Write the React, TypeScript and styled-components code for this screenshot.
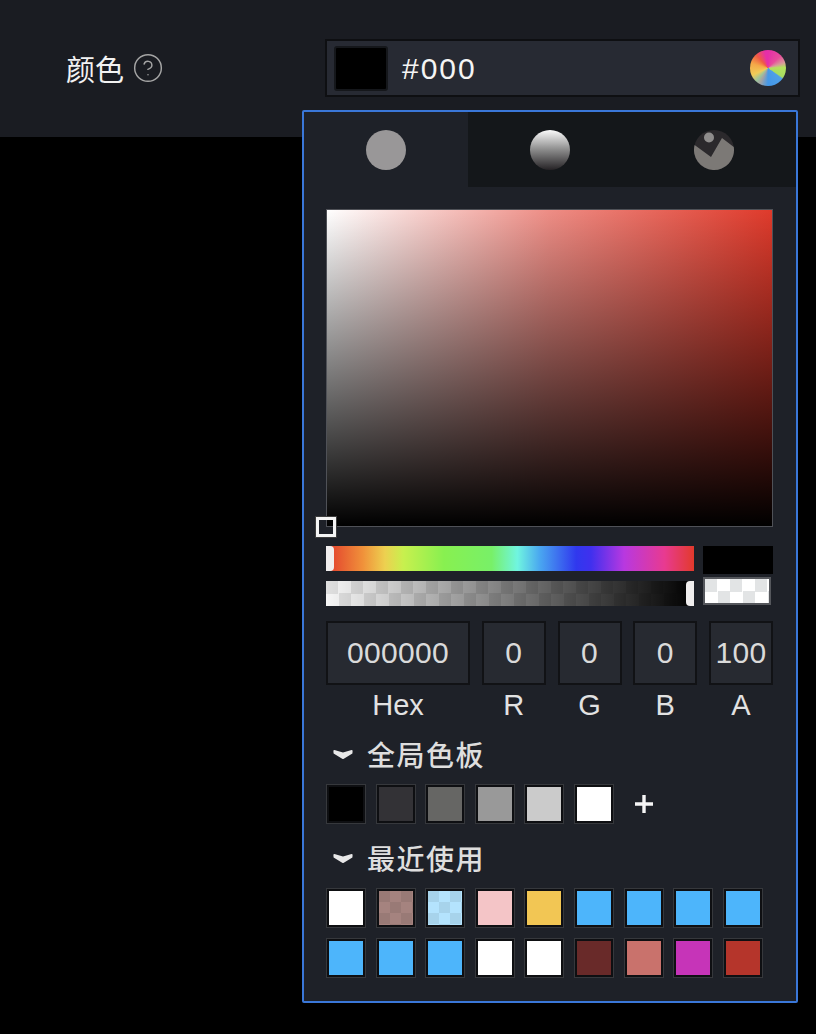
import React from 'react';
import styled, { createGlobalStyle } from 'styled-components';
import { CircleHelp } from 'lucide-react';

const GlobalStyle = createGlobalStyle`
  html, body {
    margin: 0;
    padding: 0;
    background: #000;
  }
  * {
    box-sizing: border-box;
  }
`;

const fontStack = `"Liberation Sans", "Noto Sans CJK SC", sans-serif`;

// top-left square is the dark one, same as the reference
const checker = (size: number, dark: string, light: string) => `
  background-image: conic-gradient(${light} 25%, ${dark} 0 50%, ${light} 0 75%, ${dark} 0);
  background-size: ${size * 2}px ${size * 2}px;
`;

const Page = styled.div`
  position: relative;
  width: 816px;
  height: 1034px;
  background: #000;
  font-family: ${fontStack};
  overflow: hidden;
`;

const TopBar = styled.div`
  height: 137px;
  background: #1a1c22;
  display: flex;
  justify-content: space-between;
  padding: 39px 16px 0 66px;
`;

const FieldLabel = styled.div`
  display: flex;
  align-items: center;
  gap: 8px;
  height: 58px;
  font-size: 29px;
  color: #f2f2f2;
  svg {
    color: #a5a5a5;
  }
`;

const ColorInput = styled.div`
  width: 475px;
  height: 58px;
  display: flex;
  align-items: center;
  padding: 0 12px 0 7px;
  background: #272a33;
  border: 2px solid #0e0f12;
`;

const CurrentSwatch = styled.div`
  width: 54px;
  height: 45px;
  background: #000;
  border: 2px solid #15171b;
  border-radius: 3px;
`;

const ColorValue = styled.span`
  flex: 1;
  margin-left: 14px;
  padding-top: 2px;
  font-size: 30px;
  letter-spacing: 2px;
  color: #f4f4f4;
`;

const WheelIcon = styled.div`
  width: 36px;
  height: 36px;
  border-radius: 50%;
  background: conic-gradient(
    #e62fa8 0deg,
    #e84c9c 45deg,
    #d89a9a 72deg,
    #b4e25e 88deg,
    #a8dc62 122deg,
    #4f9fe8 128deg,
    #4498e8 180deg,
    #a4a4a4 208deg,
    #9cc49c 222deg,
    #f0cc58 245deg,
    #f4a848 285deg,
    #ef5a44 318deg,
    #e62fa8 350deg
  );
`;

const Popover = styled.div`
  position: absolute;
  left: 302px;
  top: 110px;
  width: 496px;
  height: 893px;
  background: #1e2128;
  border: 2px solid #3a77d8;
  border-radius: 2px;
`;

const Tabs = styled.div`
  display: flex;
  height: 75px;
  background: #14171a;
`;

const Tab = styled.div<{ $active?: boolean }>`
  width: 164px;
  flex: 1;
  display: flex;
  align-items: center;
  justify-content: center;
  background: ${p => (p.$active ? '#1e2128' : 'transparent')};
`;

const TabDot = styled.div<{ $gradient?: boolean }>`
  width: 40px;
  height: 40px;
  border-radius: 50%;
  background: ${p => (p.$gradient ? 'linear-gradient(#fbfbfb, #8a8a8a 50%, #252225)' : '#999798')};
`;

const Body = styled.div`
  padding: 22px 23px 0 22px;
`;

const Saturation = styled.div`
  position: relative;
  width: 447px;
  height: 318px;
  border: 1px solid rgba(255, 255, 255, 0.22);
  background-clip: padding-box;
  background-image:
    linear-gradient(to bottom, rgba(0, 0, 0, 0), #000),
    linear-gradient(to right, #fff, #ee8d85 50%, #df3a2b);
  background-origin: padding-box;
`;

const SatHandle = styled.div`
  position: absolute;
  left: -11px;
  bottom: -11px;
  width: 20px;
  height: 20px;
  border: 3px solid #f4f4f4;
  box-shadow: 0 0 0 1px #3c3c3c;
`;

const SliderRow = styled.div`
  display: flex;
  justify-content: space-between;
  margin-top: 19px;
  height: 60px;
`;

const Sliders = styled.div`
  width: 368px;
  display: flex;
  flex-direction: column;
  justify-content: space-between;
`;

const Track = styled.div`
  position: relative;
  height: 25px;
`;

const HueTrack = styled(Track)`
  background: linear-gradient(
    to right,
    #e23a2c 0%,
    #f0913a 10%,
    #edd050 16%,
    #c8f04e 21%,
    #88f050 32%,
    #78f068 45%,
    #70f5e0 52%,
    #4aa8f0 58%,
    #3038ee 68%,
    #4030ee 72%,
    #b838e0 81%,
    #e83a90 92%,
    #e23a2c 100%
  );
`;

const AlphaTrack = styled(Track)`
  ${checker(12.5, '#e0e0e0', '#f6f6f6')}
  &::before {
    content: '';
    position: absolute;
    inset: 0;
    background: linear-gradient(to right, rgba(0, 0, 0, 0), #000);
  }
`;

const Thumb = styled.div<{ $right?: boolean }>`
  position: absolute;
  top: 0;
  ${p => (p.$right ? 'right: 0;' : 'left: 0;')}
  width: 8px;
  height: 25px;
  background: #f0eeee;
  border-radius: ${p => (p.$right ? '4px 0 0 4px' : '0 4px 4px 0')};
`;

const Previews = styled.div`
  width: 70px;
  display: flex;
  flex-direction: column;
  justify-content: space-between;
`;

const PreviewBlack = styled.div`
  height: 28px;
  background: #000;
`;

const PreviewAlpha = styled.div`
  width: 68px;
  height: 28px;
  margin-bottom: 1px;
  border: 2px solid #55575c;
  ${checker(12.5, '#e2e4e5', '#fff')}
`;

const Inputs = styled.div`
  display: grid;
  grid-template-columns: 144px 64px 64px 64px 64px;
  justify-content: space-between;
  margin-top: 15px;
`;

const InputCol = styled.div`
  display: flex;
  flex-direction: column;
  align-items: center;
`;

const InputBox = styled.div`
  width: 100%;
  height: 64px;
  display: flex;
  align-items: center;
  justify-content: center;
  background: #272a31;
  border: 2px solid #111215;
  color: #dadada;
  font-size: 30px;
  letter-spacing: 0.3px;
`;

const InputLabel = styled.div`
  margin-top: 4px;
  height: 32px;
  line-height: 32px;
  color: #e2e2e2;
  font-size: 29px;
`;

const SectionTitle = styled.div<{ $top: number }>`
  display: flex;
  align-items: center;
  gap: 14px;
  height: 40px;
  padding: 0 0 2px 7px;
  color: #dedede;
  font-size: 28px;
  font-weight: 500;
  letter-spacing: 1.5px;
  margin-top: ${p => p.$top}px;
`;

const SwatchGrid = styled.div`
  display: grid;
  grid-template-columns: repeat(9, 40px);
  column-gap: 9.6px;
  row-gap: 10px;
  margin-top: 9px;
`;

const Swatch = styled.div<{ $color: string; $alpha?: boolean }>`
  position: relative;
  width: 40px;
  height: 40px;
  background: ${p => p.$color};
  border: 3px solid #0e0f12;
  outline: 1px solid #36383c;
  outline-offset: -1px;
  ${p =>
    p.$alpha &&
    `background-image: conic-gradient(transparent 25%, rgba(0,0,0,.07) 0 50%, transparent 0 75%, rgba(0,0,0,.07) 0);
     background-size: 22px 22px;`}
`;

const PlusCell = styled.div`
  width: 40px;
  height: 40px;
  display: flex;
  align-items: center;
  justify-content: center;
  svg {
    color: #f5f5f5;
  }
`;

const Chevron = () => (
  <svg width="20" height="11" viewBox="0 0 20 11">
    <path d="M1.4 1 L10 3.6 L18.6 1 Q19.8 1 19.6 2.2 L19.4 4.4 L10.8 9.8 Q10 10.2 9.2 9.8 L0.6 4.4 L0.4 2.2 Q0.2 1 1.4 1 Z" fill="#e8e8e8" />
  </svg>
);

const ImageDot = () => (
  <svg width="40" height="40" viewBox="0 0 40 40">
    <circle cx="20" cy="20" r="20" fill="#2b292c" />
    <path d="M0.63 15 L17 27 L28 8 L39.77 17 A20 20 0 1 1 0.63 15 Z" fill="#7c7976" />
    <circle cx="15" cy="7.5" r="5" fill="#8f8d8c" />
  </svg>
);

const globalColors = ['#000000', '#333236', '#666664', '#999999', '#cbcbcb', '#ffffff'];

const recentColors = [
  { color: '#ffffff' },
  { color: '#a5837f', alpha: true },
  { color: '#b4e3fd', alpha: true },
  { color: '#f4c5c7' },
  { color: '#f2c654' },
  { color: '#4db5fb' },
  { color: '#4db5fb' },
  { color: '#4db5fb' },
  { color: '#4db5fb' },
  { color: '#4db5fb' },
  { color: '#4db5fb' },
  { color: '#4db5fb' },
  { color: '#ffffff' },
  { color: '#ffffff' },
  { color: '#692a29' },
  { color: '#c9726c' },
  { color: '#c634b8' },
  { color: '#b5352b' },
];

const rgbaFields = [
  { label: 'Hex', value: '000000' },
  { label: 'R', value: '0' },
  { label: 'G', value: '0' },
  { label: 'B', value: '0' },
  { label: 'A', value: '100' },
];

const App: React.FC = () => {
  return (
    <Page>
      <GlobalStyle />
      <TopBar>
        <FieldLabel>
          颜色
          <CircleHelp size={32} strokeWidth={1.1} />
        </FieldLabel>
        <ColorInput>
          <CurrentSwatch />
          <ColorValue>#000</ColorValue>
          <WheelIcon />
        </ColorInput>
      </TopBar>
      <Popover>
        <Tabs>
          <Tab $active>
            <TabDot />
          </Tab>
          <Tab>
            <TabDot $gradient />
          </Tab>
          <Tab>
            <ImageDot />
          </Tab>
        </Tabs>
        <Body>
          <Saturation>
            <SatHandle />
          </Saturation>
          <SliderRow>
            <Sliders>
              <HueTrack>
                <Thumb />
              </HueTrack>
              <AlphaTrack>
                <Thumb $right />
              </AlphaTrack>
            </Sliders>
            <Previews>
              <PreviewBlack />
              <PreviewAlpha />
            </Previews>
          </SliderRow>
          <Inputs>
            {rgbaFields.map(f => (
              <InputCol key={f.label}>
                <InputBox>{f.value}</InputBox>
                <InputLabel>{f.label}</InputLabel>
              </InputCol>
            ))}
          </Inputs>
          <SectionTitle $top={14}>
            <Chevron />
            全局色板
          </SectionTitle>
          <SwatchGrid>
            {globalColors.map(c => (
              <Swatch key={c} $color={c} />
            ))}
            <PlusCell>
              <svg width="20" height="20" viewBox="0 0 20 20">
                <path d="M10 1V19M1 10H19" stroke="currentColor" strokeWidth="3.4" />
              </svg>
            </PlusCell>
          </SwatchGrid>
          <SectionTitle $top={15}>
            <Chevron />
            最近使用
          </SectionTitle>
          <SwatchGrid>
            {recentColors.map((s, i) => (
              <Swatch key={i} $color={s.color} $alpha={s.alpha} />
            ))}
          </SwatchGrid>
        </Body>
      </Popover>
    </Page>
  );
};

export default App;
